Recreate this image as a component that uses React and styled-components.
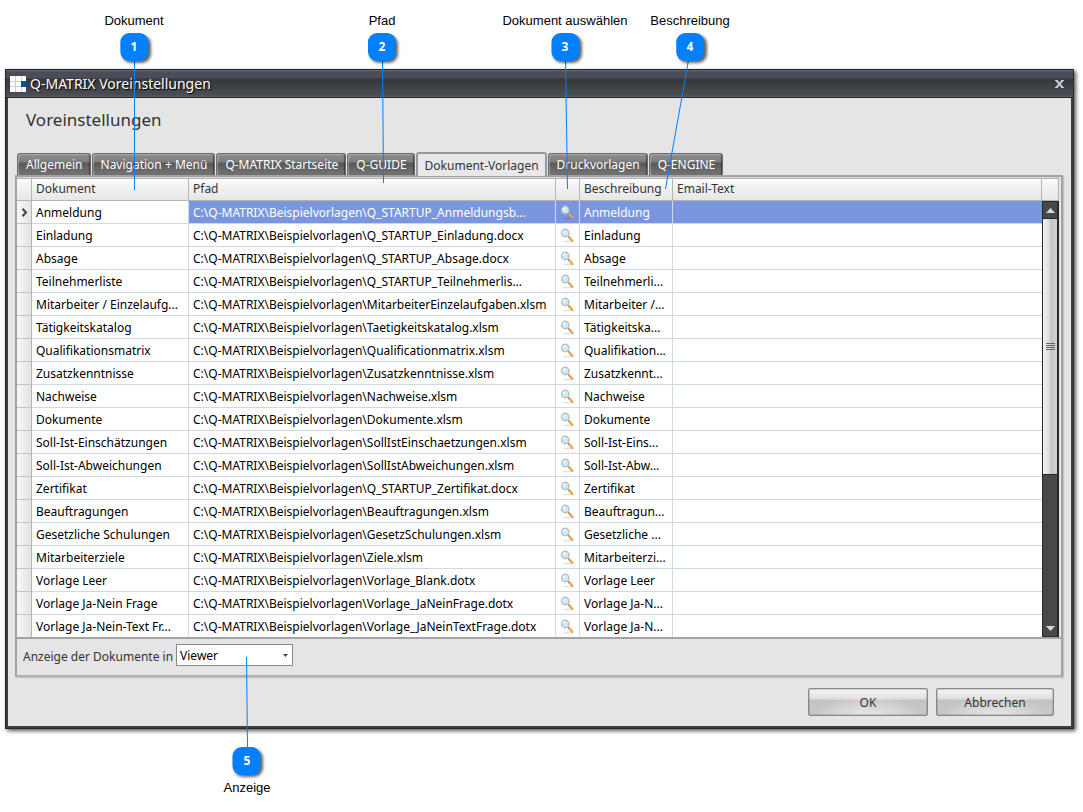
import React, { useState } from 'react'
import styled, { createGlobalStyle, css } from 'styled-components'

const GlobalStyle = createGlobalStyle`
  * {
    box-sizing: border-box;
  }
  body {
    margin: 0;
    background: #fff;
    color: #000;
    font-family: 'Noto Sans', Tahoma, sans-serif;
    font-size: 12px;
  }
  button,
  select {
    font: inherit;
  }
`

const TABS = [
  'Allgemein',
  'Navigation + Menü',
  'Q-MATRIX Startseite',
  'Q-GUIDE',
  'Dokument-Vorlagen',
  'Druckvorlagen',
  'Q-ENGINE',
]

const BASE = 'C:\\Q-MATRIX\\Beispielvorlagen\\'

const DOCUMENTS = [
  ['Anmeldung', 'Q_STARTUP_Anmeldungsb...', 'Anmeldung'],
  ['Einladung', 'Q_STARTUP_Einladung.docx', 'Einladung'],
  ['Absage', 'Q_STARTUP_Absage.docx', 'Absage'],
  ['Teilnehmerliste', 'Q_STARTUP_Teilnehmerlis...', 'Teilnehmerli...'],
  ['Mitarbeiter / Einzelaufg...', 'MitarbeiterEinzelaufgaben.xlsm', 'Mitarbeiter /...'],
  ['Tätigkeitskatalog', 'Taetigkeitskatalog.xlsm', 'Tätigkeitska...'],
  ['Qualifikationsmatrix', 'Qualificationmatrix.xlsm', 'Qualifikation...'],
  ['Zusatzkenntnisse', 'Zusatzkenntnisse.xlsm', 'Zusatzkennt...'],
  ['Nachweise', 'Nachweise.xlsm', 'Nachweise'],
  ['Dokumente', 'Dokumente.xlsm', 'Dokumente'],
  ['Soll-Ist-Einschätzungen', 'SollIstEinschaetzungen.xlsm', 'Soll-Ist-Eins...'],
  ['Soll-Ist-Abweichungen', 'SollIstAbweichungen.xlsm', 'Soll-Ist-Abw...'],
  ['Zertifikat', 'Q_STARTUP_Zertifikat.docx', 'Zertifikat'],
  ['Beauftragungen', 'Beauftragungen.xlsm', 'Beauftragun...'],
  ['Gesetzliche Schulungen', 'GesetzSchulungen.xlsm', 'Gesetzliche ...'],
  ['Mitarbeiterziele', 'Ziele.xlsm', 'Mitarbeiterzi...'],
  ['Vorlage Leer', 'Vorlage_Blank.dotx', 'Vorlage Leer'],
  ['Vorlage Ja-Nein Frage', 'Vorlage_JaNeinFrage.dotx', 'Vorlage Ja-N...'],
  ['Vorlage Ja-Nein-Text Fr...', 'Vorlage_JaNeinTextFrage.dotx', 'Vorlage Ja-N...'],
]

const CALLOUTS = [
  { number: 1, text: 'Dokument', x: 134, y: 13 },
  { number: 2, text: 'Pfad', x: 382, y: 13 },
  { number: 3, text: 'Dokument auswählen', x: 565, y: 13 },
  { number: 4, text: 'Beschreibung', x: 690, y: 13 },
  { number: 5, text: 'Anzeige', x: 247, y: 747, below: true },
]

const Page = styled.div`
  position: relative;
  padding: 69px 9px 83px 5px;
`

const Dialog = styled.section`
  background: #e5e5e5;
  border: 3px solid #3b3f45;
  border-top: 1px solid #25272b;
  outline: 1px solid #25272b;
  outline-offset: -1px;
  box-shadow: 2px 2px 4px rgba(0, 0, 0, 0.65);
`

const TitleBar = styled.header`
  display: flex;
  align-items: center;
  gap: 4px;
  height: 28px;
  margin: 0 -2px;
  padding: 0 9px 0 4px;
  color: #fff;
  border-bottom: 1px solid #25272b;
  background: linear-gradient(#676b78 0, #4a4d58 2px, #4a4c56 8px, #35363a 9px, #4a4d53 25px, #5b6070 27px);
`

const Title = styled.h1`
  flex: 1;
  margin: 0;
  font-size: 14px;
  font-weight: normal;
  text-shadow: 1px 1px 1px #000;
`

const CloseButton = styled.button`
  display: flex;
  padding: 0;
  border: 0;
  background: none;
`

const DialogBody = styled.div`
  padding: 9px 8px 10px 7px;
`

const Heading = styled.h2`
  margin: 0;
  padding-left: 11px;
  font-size: 17px;
  line-height: 26px;
  font-weight: normal;
  color: #333;
`

const TabList = styled.div`
  display: flex;
  align-items: flex-end;
  gap: 1px;
  margin-top: 19px;
  padding-left: 2px;
`

const Tab = styled.button`
  height: 22px;
  padding: 0 7px 0 8px;
  border: 1px solid #6b6b6b;
  border-bottom: 0;
  border-radius: 3px 3px 0 0;
  color: #fff;
  white-space: nowrap;
  background: linear-gradient(#8f8f8f 0, #7d7d7d 8px, #585858 9px, #757575 100%);
  box-shadow: inset 1px 1px 1px rgba(255, 255, 255, 0.3), inset -1px 0 1px rgba(0, 0, 0, 0.4);
  ${({ $active }) =>
    $active &&
    css`
      height: 24px;
      margin-bottom: -1px;
      padding: 0 6px 0 7px;
      color: #333;
      border: 2px solid #999;
      border-bottom: 0;
      background: #e8e8e8;
      box-shadow: none;
    `}
`

const Panel = styled.div`
  border: 2px solid #a3a3a3;
  border-bottom-color: #b0b0b0;
  box-shadow: 1px 1px 1px rgba(0, 0, 0, 0.15);
`

const GridArea = styled.div`
  display: flex;
  margin-right: 2px;
  height: 460px;
  overflow: hidden;
  border-top: 1px solid #d8d8d8;
`

const Table = styled.table`
  flex: 1;
  min-width: 0;
  width: 100%;
  height: max-content;
  table-layout: fixed;
  border-collapse: separate;
  border-spacing: 0;
  background: #fff;
`

const headerSurface = css`
  height: 23px;
  border-top: 1px solid #b4b4b4;
  border-bottom: 1px solid #b4b4b4;
  background: linear-gradient(#fafafa, #e6e6e6);
`

const HeaderCell = styled.th`
  ${headerSurface}
  padding: 0 4px 2px;
  border-right: 1px solid #b4b4b4;
  font-weight: normal;
  text-align: left;
  white-space: nowrap;
  overflow: hidden;
  color: #333;
`

const Cell = styled.td`
  height: 23px;
  padding: 0 0 0 4px;
  border-right: 1px solid #d0d7e5;
  border-bottom: 1px solid #d0d7e5;
  overflow: hidden;
  white-space: nowrap;
  &:last-child {
    border-right: 0;
  }
  ${({ $selected }) =>
    $selected &&
    css`
      color: #fff;
      background: #7a96df;
    `}
`

const IndicatorCell = styled.td`
  padding: 0;
  border-right: 1px solid #b4b4b4;
  border-bottom: 1px solid #c4c4c4;
  background: linear-gradient(90deg, #f8f8f8, #e4e4e4);
  svg {
    display: block;
    margin: 0 auto;
  }
`

const PickButton = styled.button`
  display: block;
  width: 16px;
  height: 16px;
  padding: 0;
  border: 0;
  background: none;
`

const ScrollColumn = styled.div`
  display: flex;
  flex-direction: column;
  width: 17px;
`

const ScrollHead = styled.div`
  ${headerSurface}
  flex: none;
  border-right: 1px solid #b4b4b4;
`

const ScrollTrack = styled.div`
  flex: 1;
  display: flex;
  flex-direction: column;
  border: 1px solid #25272b;
  border-width: 1px 2px 1px 1px;
  background: #484848;
`

const ScrollButton = styled.button`
  display: flex;
  align-items: center;
  justify-content: center;
  height: 16px;
  padding: 0;
  border: 0;
  background: none;
`

const ScrollThumb = styled.div`
  display: flex;
  align-items: center;
  justify-content: center;
  height: 257px;
  border: 1px solid #25272b;
  border-width: 1px 0;
  background: linear-gradient(90deg, #f2f2f2 0, #dadada 50%, #c4c4c6 51%, #cfcfd1 100%);
`

const ScrollRest = styled.div`
  flex: 1;
`

const ViewBar = styled.div`
  display: flex;
  align-items: flex-start;
  gap: 3px;
  height: 38px;
  padding: 5px 6px;
  border-top: 2px solid #a3a3a3;
`

const ViewLabel = styled.label`
  line-height: 26px;
  color: #333;
`

const SelectBox = styled.div`
  position: relative;
  width: 117px;
  svg {
    position: absolute;
    right: 5px;
    top: 10px;
    pointer-events: none;
  }
`

const Select = styled.select`
  display: block;
  width: 100%;
  height: 22px;
  padding: 0 3px;
  appearance: none;
  color: #000;
  background: #fff;
  border: 1px solid #8a8a8a;
  border-radius: 0;
`

const Actions = styled.footer`
  display: flex;
  justify-content: flex-end;
  gap: 8px;
  padding: 11px 9px 0 0;
`

const ActionButton = styled.button`
  width: ${({ $wide }) => ($wide ? 120 : 118)}px;
  height: 28px;
  padding: 0;
  border: 1px solid #868686;
  border-radius: 2px;
  color: #333;
  background: radial-gradient(ellipse at 50% 130%, rgba(255, 255, 255, 0.7), transparent 65%),
    linear-gradient(#f8f8f8 0, #dedede 10px, #c2c2c2 11px, #cacaca 100%);
  box-shadow: inset 0 0 2px #777;
`

const Callout = styled.div`
  position: absolute;
  left: ${({ $x }) => $x}px;
  top: ${({ $y }) => $y}px;
  transform: translateX(-50%);
  display: flex;
  flex-direction: ${({ $below }) => ($below ? 'column-reverse' : 'column')};
  align-items: center;
  gap: 5px;
  font: 13px/15px 'Liberation Sans', Arial, sans-serif;
  white-space: nowrap;
`

const Badge = styled.span`
  width: 28px;
  height: 28px;
  border-radius: 9px;
  background: #0080ff;
  color: #fff;
  font: bold 12px/28px 'Open Sans', sans-serif;
  text-align: center;
  box-shadow: 2px 2px 3px rgba(0, 0, 0, 0.6);
`

const Leaders = styled.svg`
  position: absolute;
  left: 0;
  top: 0;
  pointer-events: none;
`

const Logo = () => (
  <svg width='16' height='16' viewBox='0 0 16 16' shapeRendering='crispEdges' aria-hidden='true'>
    <rect width='16' height='16' fill='#c9ccd2' />
    <path d='M0 0h5v5H0zM6 0h5v5H6zM12 0h4v5h-4zM0 6h5v4H0zM6 6h5v4H6zM0 11h5v5H0zM6 11h5v5H6zM12 11h4v5h-4z' fill='#fff' />
    <path d='M11 5h5v6h-5z' fill='#0a4da2' />
  </svg>
)

const Magnifier = () => (
  <svg width='16' height='16' viewBox='0 -1 16 16' aria-hidden='true'>
    <ellipse cx='8' cy='13.6' rx='5' ry='1' fill='#000' opacity='0.1' />
    <path d='M7.4 7.6l1.6 1.8' stroke='#999' strokeWidth='1.4' />
    <path d='M9.2 9.2l3.2 3.7' stroke='#e08a2c' strokeWidth='2.2' strokeLinecap='round' />
    <path d='M9.4 9l3.2 3.6' stroke='#fbc67c' strokeWidth='1' strokeLinecap='round' />
    <circle cx='5.3' cy='5' r='3.7' fill='#c8ecf8' stroke='#b9bdc2' strokeWidth='1.4' />
    <path d='M3.2 5a2.2 2.2 0 0 1 2.5-2.2' stroke='#fff' strokeWidth='1.2' fill='none' />
  </svg>
)

const App = () => {
  const [activeTab, setActiveTab] = useState('Dokument-Vorlagen')
  const [selected, setSelected] = useState(0)

  return (
    <Page>
      <GlobalStyle />
      <Dialog aria-label='Q-MATRIX Voreinstellungen'>
        <TitleBar>
          <Logo />
          <Title>Q-MATRIX Voreinstellungen</Title>
          <CloseButton aria-label='Schließen'>
            <svg width='9' height='8' viewBox='0 0 9 8'>
              <path d='M1.5 0.5l6 7M7.5 0.5l-6 7' stroke='#c3cbd8' strokeWidth='2' />
              <path d='M0 0.5h3M6 0.5h3M0 7.5h3M6 7.5h3' stroke='#c3cbd8' />
            </svg>
          </CloseButton>
        </TitleBar>
        <DialogBody>
          <Heading>Voreinstellungen</Heading>
          <TabList role='tablist'>
            {TABS.map((name) => (
              <Tab
                key={name}
                role='tab'
                aria-selected={name === activeTab}
                $active={name === activeTab}
                onClick={() => setActiveTab(name)}
              >
                {name}
              </Tab>
            ))}
          </TabList>
          <Panel>
            <GridArea>
              <Table>
                <colgroup>
                  <col style={{ width: 15 }} />
                  <col style={{ width: 157 }} />
                  <col style={{ width: 367 }} />
                  <col style={{ width: 24 }} />
                  <col style={{ width: 93 }} />
                  <col />
                </colgroup>
                <thead>
                  <tr>
                    <HeaderCell />
                    <HeaderCell>Dokument</HeaderCell>
                    <HeaderCell>Pfad</HeaderCell>
                    <HeaderCell />
                    <HeaderCell>Beschreibung</HeaderCell>
                    <HeaderCell>Email-Text</HeaderCell>
                  </tr>
                </thead>
                <tbody>
                  {DOCUMENTS.map(([name, file, description], index) => {
                    const isSelected = index === selected
                    return (
                      <tr key={name} onClick={() => setSelected(index)}>
                        <IndicatorCell>
                          {isSelected && (
                            <svg width='7' height='9' viewBox='0 0 7 9'>
                              <path d='M1.5 0.8L5 4.5L1.5 8.2' fill='none' stroke='#444' strokeWidth='2' />
                            </svg>
                          )}
                        </IndicatorCell>
                        <Cell>{name}</Cell>
                        <Cell $selected={isSelected}>{BASE + file}</Cell>
                        <Cell $selected={isSelected}>
                          <PickButton aria-label='Dokument auswählen'>
                            <Magnifier />
                          </PickButton>
                        </Cell>
                        <Cell $selected={isSelected}>{description}</Cell>
                        <Cell $selected={isSelected} />
                      </tr>
                    )
                  })}
                </tbody>
              </Table>
              <ScrollColumn>
                <ScrollHead />
                <ScrollTrack>
                  <ScrollButton aria-label='Nach oben'>
                    <svg width='9' height='5' viewBox='0 0 9 5'>
                      <path d='M4.5 0L9 5H0z' fill='#d8d8d8' />
                    </svg>
                  </ScrollButton>
                  <ScrollThumb>
                    <svg width='9' height='8' viewBox='0 0 9 8' shapeRendering='crispEdges'>
                      <path d='M0 0.5h9M0 2.5h9M0 4.5h9M0 6.5h9' stroke='#666' />
                    </svg>
                  </ScrollThumb>
                  <ScrollRest />
                  <ScrollButton aria-label='Nach unten'>
                    <svg width='9' height='5' viewBox='0 0 9 5'>
                      <path d='M0 0H9L4.5 5z' fill='#d8d8d8' />
                    </svg>
                  </ScrollButton>
                </ScrollTrack>
              </ScrollColumn>
            </GridArea>
            <ViewBar>
              <ViewLabel htmlFor='view'>Anzeige der Dokumente in</ViewLabel>
              <SelectBox>
                <Select id='view' defaultValue='Viewer'>
                  <option>Viewer</option>
                </Select>
                <svg width='5' height='3' viewBox='0 0 5 3'>
                  <path d='M0 0h5L2.5 3z' fill='#444' />
                </svg>
              </SelectBox>
            </ViewBar>
          </Panel>
          <Actions>
            <ActionButton $wide>OK</ActionButton>
            <ActionButton>Abbrechen</ActionButton>
          </Actions>
        </DialogBody>
      </Dialog>

      <Leaders width='1083' height='812' viewBox='0 0 1083 812' aria-hidden='true'>
        <g stroke='#0080ff' strokeWidth='1'>
          <path d='M134.5 60V190' />
          <path d='M382.5 60L383.5 183' />
          <path d='M565.5 60L567.5 189' />
          <path d='M688.5 60L665.5 189' />
          <path d='M246.5 657L247.5 748' />
        </g>
      </Leaders>
      {CALLOUTS.map(({ number, text, x, y, below }) => (
        <Callout key={number} $x={x} $y={y} $below={below}>
          <span>{text}</span>
          <Badge>{number}</Badge>
        </Callout>
      ))}
    </Page>
  )
}

export default App
